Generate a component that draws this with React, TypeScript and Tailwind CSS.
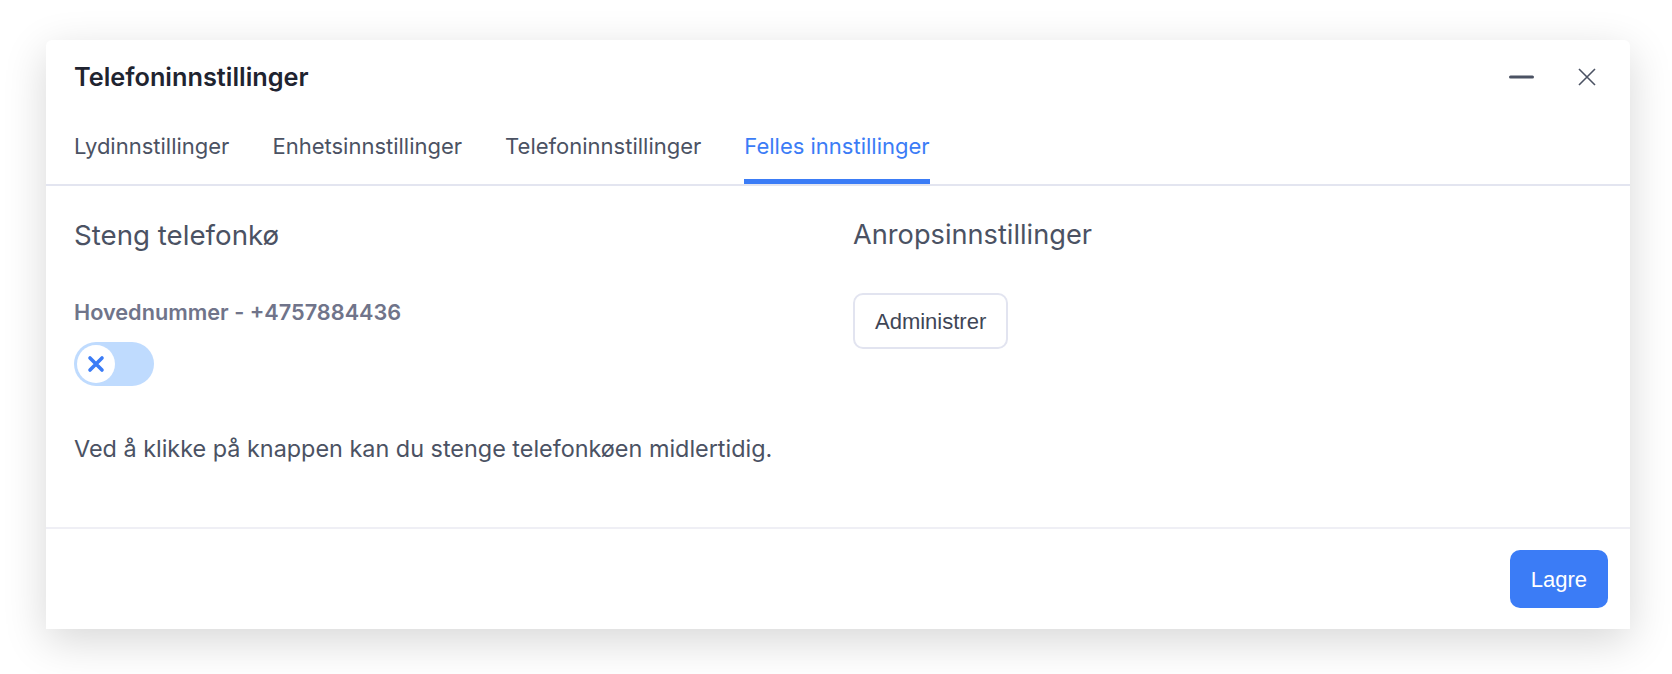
import { useState } from "react";

const tabs = [
  "Lydinnstillinger",
  "Enhetsinnstillinger",
  "Telefoninnstillinger",
  "Felles innstillinger",
];

const PhoneSettingsModal = () => {
  const [activeTab, setActiveTab] = useState(3);
  const [queueClosed, setQueueClosed] = useState(false);

  return (
    <div className="w-[1584px] bg-white rounded-t-md shadow-[0_12px_44px_rgba(0,0,0,0.16)] font-['Inter',sans-serif]">
      {/* header */}
      <div className="flex items-center justify-between pl-[28px] pr-[30px] pt-[21px]">
        <h2 className="text-[25.3px] leading-[32px] font-semibold text-[#1f2430]">
          Telefoninnstillinger
        </h2>
        <div className="flex items-center gap-[44px] pr-[4px]">
          <button className="text-[#4b5263]" aria-label="Minimer">
            <svg width="25" height="4" viewBox="0 0 25 4">
              <rect x="0" y="0.5" width="25" height="3" rx="1.5" fill="currentColor" />
            </svg>
          </button>
          <button className="text-[#4b5263]" aria-label="Lukk">
            <svg width="18" height="18" viewBox="0 0 18 18" fill="none" stroke="currentColor" strokeWidth="1.6">
              <path d="M1 1l16 16M17 1L1 17" />
            </svg>
          </button>
        </div>
      </div>

      {/* tabs */}
      <div className="mt-[38px] flex gap-[43px] px-[28px] border-b-2 border-[#e3e5f0]">
        {tabs.map((tab, i) => (
          <button
            key={tab}
            onClick={() => setActiveTab(i)}
            className={`text-[22px] leading-[30px] pb-[18px] border-b-[5px] ${
              activeTab === i
                ? "text-[#3b7cf6] border-[#3b7cf6]"
                : "text-[#4b5263] border-transparent"
            }`}
          >
            {tab}
          </button>
        ))}
      </div>

      {/* body */}
      <div className="grid grid-cols-2 gap-x-[30px] px-[28px] pt-[31px] pb-[63px] border-b-2 border-[#efeff5]">
        <div>
          <h3 className="text-[27.7px] leading-[36px] text-[#4b5263]">Steng telefonkø</h3>
          <p className="mt-[44px] text-[21.7px] leading-[30px] font-semibold text-[#70748a]">
            Hovednummer - +4757884436
          </p>
          <button
            onClick={() => setQueueClosed(!queueClosed)}
            className={`mt-[15px] flex w-[80px] h-[44px] items-center rounded-full p-[3px] bg-[#bfdbfe] ${
              queueClosed ? "justify-end" : "justify-start"
            }`}
          >
            <span className="flex w-[38px] h-[38px] items-center justify-center rounded-full bg-white">
              <svg width="18" height="18" viewBox="0 0 18 18" fill="none" stroke="#3b7cf6" strokeWidth="3.6" strokeLinecap="round">
                <path d="M3 3l12 12M15 3L3 15" />
              </svg>
            </span>
          </button>
          <p className="mt-[48px] text-[23.4px] leading-[30px] text-[#4b5263]">
            Ved å klikke på knappen kan du stenge telefonkøen midlertidig.
          </p>
        </div>
        <div>
          <h3 className="text-[27.2px] leading-[36px] text-[#4b5263]">Anropsinnstillinger</h3>
          <button className="mt-[40px] h-[56px] px-[20px] rounded-[10px] border-2 border-[#e2e4f0] bg-white text-[22px] text-[#3f4656] font-['Liberation_Sans',Arial,sans-serif]">
            Administrer
          </button>
        </div>
      </div>

      {/* footer */}
      <div className="flex justify-end px-[22px] py-[21px]">
        <button className="h-[58px] px-[21px] rounded-[10px] bg-[#3b7cf6] text-white text-[22px] font-['Liberation_Sans',Arial,sans-serif]">
          Lagre
        </button>
      </div>
    </div>
  );
};

export default function App() {
  return (
    <div className="min-h-screen bg-white pl-[46px] pt-[40px]">
      <PhoneSettingsModal />
    </div>
  );
}
